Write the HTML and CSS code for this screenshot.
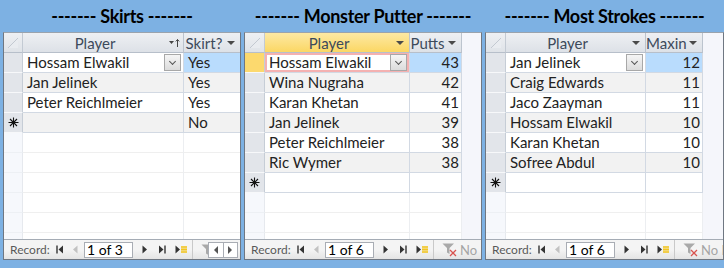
FILE: index.html
```html
<!DOCTYPE html>
<html lang="en">

<head>
    <meta charset="UTF-8">
    <meta name="viewport" content="width=device-width, initial-scale=1.0">
    <title>Golf Day Awards</title>
    <link rel="stylesheet" href="styles.css">
</head>

<body>
    <div class="desk">

        <!-- Skirts -->
        <section class="panel skirts">
            <h2 class="title">------- Skirts -------</h2>
            <div class="sheet">
                <div class="grid">
                    <div class="row head">
                        <div class="sel corner"><svg width="12" height="12" viewBox="0 0 12 12"><path d="M1 11 L11 1 L11 11 Z" fill="#e9ecf0" /><path d="M1 11 L11 1" stroke="#c3c9d1" stroke-width="1" /></svg></div>
                        <div class="hcell"><span class="label">Player</span><span class="hicon"><svg width="12" height="10" viewBox="0 0 12 10"><path d="M1 3 H6 L3.5 6 Z" fill="#444" /><path d="M9.5 9 V1.5 M7.8 3.4 L9.5 1.5 L11.2 3.4" stroke="#444" stroke-width="1" fill="none" /></svg></span></div>
                        <div class="hcell"><span class="label">Skirt?</span><span class="hicon"><span class="tri"></span></span></div>
                    </div>
                    <div class="row current">
                        <div class="sel"></div>
                        <div class="cell active">Hossam Elwakil<span class="combo"><span class="chev"></span></span></div>
                        <div class="cell picked">Yes</div>
                    </div>
                    <div class="row alt">
                        <div class="sel"></div>
                        <div class="cell">Jan Jelinek</div>
                        <div class="cell">Yes</div>
                    </div>
                    <div class="row">
                        <div class="sel"></div>
                        <div class="cell">Peter Reichlmeier</div>
                        <div class="cell">Yes</div>
                    </div>
                    <div class="row alt">
                        <div class="sel newrow"><svg width="11" height="11" viewBox="0 0 11 11"><path d="M5.5 0.5 V10.5 M0.5 5.5 H10.5 M2 2 L9 9 M9 2 L2 9" stroke="#111" stroke-width="1.1" /></svg></div>
                        <div class="cell"></div>
                        <div class="cell">No</div>
                    </div>
                    <div class="row blank"><div class="sel"></div><div class="cell"></div><div class="cell"></div></div>
                    <div class="row blank"><div class="sel"></div><div class="cell"></div><div class="cell"></div></div>
                    <div class="row blank"><div class="sel"></div><div class="cell"></div><div class="cell"></div></div>
                    <div class="row blank"><div class="sel"></div><div class="cell"></div><div class="cell"></div></div>
                    <div class="row blank"><div class="sel"></div><div class="cell"></div><div class="cell"></div></div>
                    <div class="row blank"><div class="sel"></div><div class="cell"></div><div class="cell"></div></div>
                </div>
                <div class="nav">
                    <span class="rec">Record:</span>
                    <span class="btn first"><svg width="8" height="9" viewBox="0 0 8 9"><path d="M1 0.5 V8.5" stroke="#333" stroke-width="1.4" /><path d="M7 0.5 V8.5 L2.5 4.5 Z" fill="#333" /></svg></span>
                    <span class="btn prev"><svg width="6" height="9" viewBox="0 0 6 9"><path d="M5.5 0.5 V8.5 L1 4.5 Z" fill="#c2c2c2" /></svg></span>
                    <span class="box">1 of 3</span>
                    <span class="btn next"><svg width="6" height="9" viewBox="0 0 6 9"><path d="M0.5 0.5 V8.5 L5 4.5 Z" fill="#333" /></svg></span>
                    <span class="btn last"><svg width="8" height="9" viewBox="0 0 8 9"><path d="M1 0.5 V8.5 L5.5 4.5 Z" fill="#333" /><path d="M7 0.5 V8.5" stroke="#333" stroke-width="1.4" /></svg></span>
                    <span class="btn add"><svg width="12" height="9" viewBox="0 0 12 9"><path d="M0.5 0.5 V8.5 L5 4.5 Z" fill="#333" /><path d="M6 2 H12 M6 4.5 H12 M6 7 H12 M7 1 V8 M9 1 V8 M11 1 V8" stroke="#f2c521" stroke-width="1.2" /></svg></span>
                    <span class="sep"></span>
                    <span class="filter"><svg width="14" height="12" viewBox="0 0 14 12"><path d="M0.5 0.5 H12 L7.5 5 V11 L5 9.5 V5 Z" fill="#a9a9a9" /></svg></span>
                    <span class="scroll"><span class="sbtn"><span class="ltri"></span></span><span class="sbtn"><span class="rtri"></span></span></span>
                </div>
            </div>
        </section>

        <!-- Monster Putter -->
        <section class="panel putter">
            <h2 class="title">------- Monster Putter -------</h2>
            <div class="sheet">
                <div class="grid">
                    <div class="row head">
                        <div class="sel corner"><svg width="12" height="12" viewBox="0 0 12 12"><path d="M1 11 L11 1 L11 11 Z" fill="#e9ecf0" /><path d="M1 11 L11 1" stroke="#c3c9d1" stroke-width="1" /></svg></div>
                        <div class="hcell lit"><span class="label">Player</span><span class="hicon"><span class="tri"></span></span></div>
                        <div class="hcell"><span class="label">Putts</span><span class="hicon"><span class="tri"></span></span></div>
                    </div>
                    <div class="row current">
                        <div class="sel lit"></div>
                        <div class="cell active editing">Hossam Elwakil<span class="combo"><span class="chev"></span></span></div>
                        <div class="cell num picked">43</div>
                    </div>
                    <div class="row alt"><div class="sel"></div><div class="cell">Wina Nugraha</div><div class="cell num">42</div></div>
                    <div class="row"><div class="sel"></div><div class="cell">Karan Khetan</div><div class="cell num">41</div></div>
                    <div class="row alt"><div class="sel"></div><div class="cell">Jan Jelinek</div><div class="cell num">39</div></div>
                    <div class="row"><div class="sel"></div><div class="cell">Peter Reichlmeier</div><div class="cell num">38</div></div>
                    <div class="row alt"><div class="sel"></div><div class="cell">Ric Wymer</div><div class="cell num">38</div></div>
                    <div class="row">
                        <div class="sel newrow"><svg width="11" height="11" viewBox="0 0 11 11"><path d="M5.5 0.5 V10.5 M0.5 5.5 H10.5 M2 2 L9 9 M9 2 L2 9" stroke="#111" stroke-width="1.1" /></svg></div>
                        <div class="cell"></div>
                        <div class="cell"></div>
                    </div>
                    <div class="row blank"><div class="sel"></div><div class="cell"></div><div class="cell"></div></div>
                    <div class="row blank"><div class="sel"></div><div class="cell"></div><div class="cell"></div></div>
                    <div class="row blank"><div class="sel"></div><div class="cell"></div><div class="cell"></div></div>
                </div>
                <div class="nav">
                    <span class="rec">Record:</span>
                    <span class="btn first"><svg width="8" height="9" viewBox="0 0 8 9"><path d="M1 0.5 V8.5" stroke="#333" stroke-width="1.4" /><path d="M7 0.5 V8.5 L2.5 4.5 Z" fill="#333" /></svg></span>
                    <span class="btn prev"><svg width="6" height="9" viewBox="0 0 6 9"><path d="M5.5 0.5 V8.5 L1 4.5 Z" fill="#c2c2c2" /></svg></span>
                    <span class="box">1 of 6</span>
                    <span class="btn next"><svg width="6" height="9" viewBox="0 0 6 9"><path d="M0.5 0.5 V8.5 L5 4.5 Z" fill="#333" /></svg></span>
                    <span class="btn last"><svg width="8" height="9" viewBox="0 0 8 9"><path d="M1 0.5 V8.5 L5.5 4.5 Z" fill="#333" /><path d="M7 0.5 V8.5" stroke="#333" stroke-width="1.4" /></svg></span>
                    <span class="btn add"><svg width="12" height="9" viewBox="0 0 12 9"><path d="M0.5 0.5 V8.5 L5 4.5 Z" fill="#333" /><path d="M6 2 H12 M6 4.5 H12 M6 7 H12 M7 1 V8 M9 1 V8 M11 1 V8" stroke="#f2c521" stroke-width="1.2" /></svg></span>
                    <span class="sep"></span>
                    <span class="filter"><svg width="16" height="14" viewBox="0 0 16 14"><path d="M0.5 0.5 H12 L7.5 5 V11 L5 9.5 V5 Z" fill="#a9a9a9" /><path d="M8 7 L14 13 M14 7 L8 13" stroke="#d9534f" stroke-width="1.3" /></svg><span class="nofilter">No Filter</span></span>
                </div>
            </div>
        </section>

        <!-- Most Strokes -->
        <section class="panel strokes">
            <h2 class="title">------- Most Strokes -------</h2>
            <div class="sheet">
                <div class="grid">
                    <div class="row head">
                        <div class="sel corner"><svg width="12" height="12" viewBox="0 0 12 12"><path d="M1 11 L11 1 L11 11 Z" fill="#e9ecf0" /><path d="M1 11 L11 1" stroke="#c3c9d1" stroke-width="1" /></svg></div>
                        <div class="hcell"><span class="label">Player</span><span class="hicon"><span class="tri"></span></span></div>
                        <div class="hcell"><span class="label">Maxin</span><span class="hicon"><span class="tri"></span></span></div>
                    </div>
                    <div class="row current">
                        <div class="sel"></div>
                        <div class="cell active">Jan Jelinek<span class="combo"><span class="chev"></span></span></div>
                        <div class="cell num picked">12</div>
                    </div>
                    <div class="row alt"><div class="sel"></div><div class="cell">Craig Edwards</div><div class="cell num">11</div></div>
                    <div class="row"><div class="sel"></div><div class="cell">Jaco Zaayman</div><div class="cell num">11</div></div>
                    <div class="row alt"><div class="sel"></div><div class="cell">Hossam Elwakil</div><div class="cell num">10</div></div>
                    <div class="row"><div class="sel"></div><div class="cell">Karan Khetan</div><div class="cell num">10</div></div>
                    <div class="row alt"><div class="sel"></div><div class="cell">Sofree Abdul</div><div class="cell num">10</div></div>
                    <div class="row">
                        <div class="sel newrow"><svg width="11" height="11" viewBox="0 0 11 11"><path d="M5.5 0.5 V10.5 M0.5 5.5 H10.5 M2 2 L9 9 M9 2 L2 9" stroke="#111" stroke-width="1.1" /></svg></div>
                        <div class="cell"></div>
                        <div class="cell"></div>
                    </div>
                    <div class="row blank"><div class="sel"></div><div class="cell"></div><div class="cell"></div></div>
                    <div class="row blank"><div class="sel"></div><div class="cell"></div><div class="cell"></div></div>
                    <div class="row blank"><div class="sel"></div><div class="cell"></div><div class="cell"></div></div>
                </div>
                <div class="nav">
                    <span class="rec">Record:</span>
                    <span class="btn first"><svg width="8" height="9" viewBox="0 0 8 9"><path d="M1 0.5 V8.5" stroke="#333" stroke-width="1.4" /><path d="M7 0.5 V8.5 L2.5 4.5 Z" fill="#333" /></svg></span>
                    <span class="btn prev"><svg width="6" height="9" viewBox="0 0 6 9"><path d="M5.5 0.5 V8.5 L1 4.5 Z" fill="#c2c2c2" /></svg></span>
                    <span class="box">1 of 6</span>
                    <span class="btn next"><svg width="6" height="9" viewBox="0 0 6 9"><path d="M0.5 0.5 V8.5 L5 4.5 Z" fill="#333" /></svg></span>
                    <span class="btn last"><svg width="8" height="9" viewBox="0 0 8 9"><path d="M1 0.5 V8.5 L5.5 4.5 Z" fill="#333" /><path d="M7 0.5 V8.5" stroke="#333" stroke-width="1.4" /></svg></span>
                    <span class="btn add"><svg width="12" height="9" viewBox="0 0 12 9"><path d="M0.5 0.5 V8.5 L5 4.5 Z" fill="#333" /><path d="M6 2 H12 M6 4.5 H12 M6 7 H12 M7 1 V8 M9 1 V8 M11 1 V8" stroke="#f2c521" stroke-width="1.2" /></svg></span>
                    <span class="sep"></span>
                    <span class="filter"><svg width="16" height="14" viewBox="0 0 16 14"><path d="M0.5 0.5 H12 L7.5 5 V11 L5 9.5 V5 Z" fill="#a9a9a9" /><path d="M8 7 L14 13 M14 7 L8 13" stroke="#d9534f" stroke-width="1.3" /></svg><span class="nofilter">No Filter</span></span>
                </div>
            </div>
        </section>

    </div>
</body>

</html>
```

FILE: styles.css
```css
body {
    margin: 0;
    background-color: #7db1e3;
    font-family: Lato, "Open Sans", sans-serif;
    color: #222;
}

.desk {
    display: flex;
    gap: 3px;
    padding-left: 3px;
    height: 268px;
}

.panel {
    width: 238px;
    display: flex;
    flex-direction: column;
}

.strokes {
    width: 239px;
}

.title {
    margin: 0;
    height: 32px;
    line-height: 32px;
    text-align: center;
    font-size: 18px;
    font-weight: bold;
    letter-spacing: -0.3px;
    color: #000;
}

.sheet {
    height: 228px;
    border: 1px solid #6f7782;
    border-top-color: #9aa3ad;
    box-sizing: border-box;
    display: flex;
    flex-direction: column;
    background-color: #f5f6fb;
}

.grid {
    flex: 1;
    overflow: hidden;
}

.row {
    display: grid;
    width: max-content;
    height: 20px;
    box-sizing: border-box;
    font-size: 15px;
}

.skirts .row {
    grid-template-columns: 19px 161px 57px;
}

.putter .row {
    grid-template-columns: 20px 145px 52px;
}

.strokes .row {
    grid-template-columns: 20px 140px 57px;
}

.sel {
    background-color: #e2e5ea;
    border-right: 1px solid #c6cdd6;
    border-bottom: 1px solid #f7f8fa;
    display: flex;
    align-items: center;
    justify-content: center;
}

.sel.lit {
    background-color: #fcd96e;
}

.cell {
    background-color: #fff;
    border-right: 1px solid #d2d9e3;
    border-bottom: 1px solid #d2d9e3;
    padding: 0 4px;
    line-height: 19px;
    white-space: nowrap;
    overflow: hidden;
    position: relative;
}

.row.alt .cell {
    background-color: #f2f2f2;
}

.cell.num {
    text-align: right;
    padding-right: 2px;
}

.cell.picked {
    background-color: #b9dcfd;
}

.cell.editing {
    box-shadow: inset 0 0 0 2px #f4b1b1;
}

.combo {
    position: absolute;
    right: 2px;
    top: 1px;
    width: 15px;
    height: 15px;
    border: 1px solid #a8a8a8;
    background: linear-gradient(#f5f5f5, #dcdcdc);
    display: flex;
    align-items: center;
    justify-content: center;
}

.chev {
    width: 4px;
    height: 4px;
    border-right: 1.5px solid #555;
    border-bottom: 1.5px solid #555;
    transform: rotate(45deg);
    margin-top: -3px;
}

/* header row */
.row.head .sel {
    background: linear-gradient(#eef0f3, #dfe3e8);
    border-right: 1px solid #c3cad3;
    border-bottom: 1px solid #b7bfca;
}

.corner {
    align-items: flex-end;
    justify-content: flex-end;
    padding: 0 3px 3px 0;
}

.hcell {
    display: flex;
    align-items: center;
    background: linear-gradient(#eef0f3, #dde1e7);
    border-right: 1px solid #bcc4ce;
    border-bottom: 1px solid #b7bfca;
    color: #3d4a5b;
    white-space: nowrap;
    overflow: hidden;
}

.hcell.lit {
    background: linear-gradient(#fde9a4, #fbd764);
}

.hcell .label {
    flex: 1;
    text-align: center;
}

.hicon {
    width: 14px;
    display: flex;
    align-items: center;
    justify-content: center;
    margin-right: 2px;
}

.tri {
    width: 0;
    height: 0;
    border-left: 4px solid transparent;
    border-right: 4px solid transparent;
    border-top: 4px solid #4a4a4a;
}

/* empty rows below the records */
.row.blank .sel {
    background-color: #f6f8fc;
    border-right: 1px solid #e6e9ee;
    border-bottom: 1px solid #edf0f4;
}

.row.blank .cell {
    background-color: #fff;
    border-right: 1px solid #eceef1;
    border-bottom: 1px solid #efefef;
}

/* record navigator */
.nav {
    height: 19px;
    flex-shrink: 0;
    border-top: 1px solid #a5acb5;
    background: linear-gradient(#f4f4f4 50%, #e4e4e4);
    display: flex;
    align-items: center;
    padding-left: 6px;
    font-size: 13px;
    overflow: hidden;
    white-space: nowrap;
}

.nav svg {
    flex-shrink: 0;
}

.rec {
    width: 42px;
    flex-shrink: 0;
    font-size: 12px;
    color: #595959;
}

.btn {
    display: flex;
    align-items: center;
    justify-content: center;
    flex-shrink: 0;
}

.first {
    width: 15px;
}

.prev {
    width: 15px;
}

.next {
    width: 18px;
    margin-left: 3px;
}

.last {
    width: 16px;
}

.add {
    width: 18px;
    padding-left: 2px;
}

.box {
    width: 49px;
    height: 16px;
    margin-left: 2px;
    box-sizing: border-box;
    border: 1px solid #a9adb4;
    background-color: #fff;
    color: #000;
    font-size: 14px;
    line-height: 14px;
    padding-left: 2px;
    flex-shrink: 0;
}

.sep {
    width: 1px;
    height: 19px;
    background-color: #c9c9c9;
    margin: 0 5px 0 2px;
    flex-shrink: 0;
}

.filter {
    display: flex;
    align-items: center;
    gap: 2px;
    color: #a5a5a5;
    overflow: hidden;
    min-width: 0;
    padding-left: 3px;
}

.skirts .filter {
    flex: 1;
}

.scroll {
    width: 30px;
    height: 16px;
    box-sizing: border-box;
    border: 1px solid #a9adb4;
    background-color: #fff;
    display: flex;
    flex-shrink: 0;
    margin-right: 2px;
}

.sbtn {
    flex: 1;
    display: flex;
    align-items: center;
    justify-content: center;
}

.sbtn + .sbtn {
    border-left: 1px solid #a9adb4;
}

.ltri {
    border-top: 4px solid transparent;
    border-bottom: 4px solid transparent;
    border-right: 4px solid #555;
}

.rtri {
    border-top: 4px solid transparent;
    border-bottom: 4px solid transparent;
    border-left: 4px solid #555;
}
```
